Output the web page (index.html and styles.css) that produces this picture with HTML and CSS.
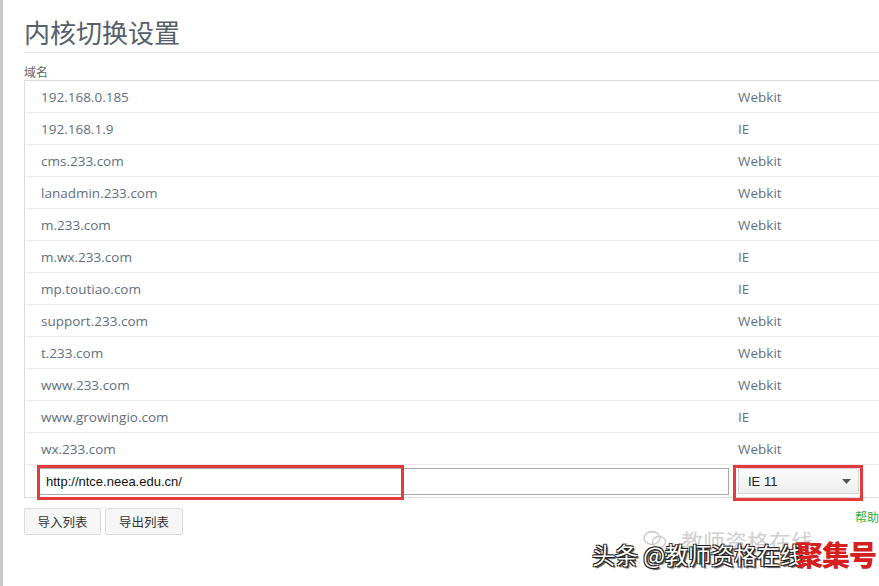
FILE: index.html
```html
<!DOCTYPE html>
<html lang="zh-CN">
<head>
    <meta charset="UTF-8">
    <title>内核切换设置</title>
    <link rel="stylesheet" href="styles.css">
</head>
<body>
    <div class="page">
        <h1 class="page-title">内核切换设置</h1>
        <div class="field-label">域名</div>

        <div class="rule-table">
            <div class="rule-row"><span class="domain">192.168.0.185</span><span class="engine">Webkit</span></div>
            <div class="rule-row"><span class="domain">192.168.1.9</span><span class="engine">IE</span></div>
            <div class="rule-row"><span class="domain">cms.233.com</span><span class="engine">Webkit</span></div>
            <div class="rule-row"><span class="domain">lanadmin.233.com</span><span class="engine">Webkit</span></div>
            <div class="rule-row"><span class="domain">m.233.com</span><span class="engine">Webkit</span></div>
            <div class="rule-row"><span class="domain">m.wx.233.com</span><span class="engine">IE</span></div>
            <div class="rule-row"><span class="domain">mp.toutiao.com</span><span class="engine">IE</span></div>
            <div class="rule-row"><span class="domain">support.233.com</span><span class="engine">Webkit</span></div>
            <div class="rule-row"><span class="domain">t.233.com</span><span class="engine">Webkit</span></div>
            <div class="rule-row"><span class="domain">www.233.com</span><span class="engine">Webkit</span></div>
            <div class="rule-row"><span class="domain">www.growingio.com</span><span class="engine">IE</span></div>
            <div class="rule-row"><span class="domain">wx.233.com</span><span class="engine">Webkit</span></div>

            <div class="edit-row">
                <div class="url-wrap">
                    <input class="url-input" type="text" value="http://ntce.neea.edu.cn/">
                    <span class="mark mark-url"></span>
                </div>
                <div class="select-wrap">
                    <div class="engine-select">
                        <span>IE 11</span>
                        <svg class="caret" width="9" height="5" viewBox="0 0 9 5"><path d="M0 0h9L4.5 5z" fill="#555"/></svg>
                    </div>
                    <span class="mark mark-select"></span>
                </div>
            </div>
        </div>

        <div class="actions">
            <button class="btn" type="button">导入列表</button>
            <button class="btn" type="button">导出列表</button>
            <a class="help-link" href="#">帮助</a>
        </div>
    </div>

    <div class="watermark-faint">
        <svg width="24" height="20" viewBox="0 0 24 20"><ellipse cx="9" cy="8" rx="8" ry="6.5" fill="none" stroke="#c8c8c8" stroke-width="1.3"/><ellipse cx="16" cy="12" rx="6.5" ry="5.5" fill="none" stroke="#c8c8c8" stroke-width="1.3"/></svg>
        <span>教师资格在线</span>
    </div>
    <div class="watermark">
        <span class="wm-text">头条 @教师资格在线</span><span class="wm-red">聚集号</span>
    </div>
</body>
</html>
```

FILE: styles.css
```css
* {
    margin: 0;
    padding: 0;
    box-sizing: border-box;
}

body {
    font-family: 'Open Sans', 'Noto Sans CJK SC', sans-serif;
    background: #fff;
    width: 879px;
    height: 586px;
    overflow: hidden;
    position: relative;
    border-left: 3px solid #c9c9c9;
}

.page {
    padding: 14px 0 0 21px;
}

.page-title {
    font-family: 'Noto Sans CJK SC', sans-serif;
    font-size: 26px;
    font-weight: 400;
    color: #56606b;
    line-height: 36px;
    padding-bottom: 2px;
    border-bottom: 1px solid #e6e6e6;
}

.field-label {
    font-family: 'Noto Sans CJK SC', sans-serif;
    font-size: 12px;
    color: #666;
    line-height: 16px;
    margin-top: 11px;
}

.rule-table {
    border: 1px solid #dcdcdc;
    border-right: none;
}

.rule-row {
    display: flex;
    height: 32px;
    align-items: center;
    border-bottom: 1px solid #e9e9e9;
    font-size: 13.5px;
    color: #617080;
}

.domain {
    width: 713px;
    padding-left: 16px;
}

.engine {
    flex: 1;
}

.edit-row {
    display: flex;
    align-items: center;
    height: 32px;
    padding-left: 14px;
}

.url-wrap,
.select-wrap {
    position: relative;
}

.url-input {
    display: block;
    width: 690px;
    height: 27px;
    border: 1px solid #a9a9a9;
    padding: 0 6px;
    font-family: 'Liberation Sans', Arial, sans-serif;
    font-size: 13px;
    color: #111;
    outline: none;
}

.select-wrap {
    margin-left: 9px;
}

.engine-select {
    width: 121px;
    height: 26px;
    display: flex;
    align-items: center;
    justify-content: space-between;
    padding: 0 7px 0 9px;
    border: 1px solid #d6d6d6;
    background: linear-gradient(#fafafa, #eeeeee);
    font-family: 'Liberation Sans', Arial, sans-serif;
    font-size: 13px;
    color: #222;
}

/* red annotation boxes drawn over the controls */
.mark {
    position: absolute;
    border: 3px solid #e23b3b;
    pointer-events: none;
}

.mark-url {
    left: -2px;
    top: -3px;
    width: 367px;
    height: 35px;
}

.mark-select {
    left: -5px;
    top: -3px;
    width: 130px;
    height: 36px;
}

.actions {
    display: flex;
    align-items: center;
    gap: 4px;
    margin-top: 10px;
}

.btn {
    height: 27px;
    padding: 0 11px;
    font-family: 'Noto Sans CJK SC', sans-serif;
    font-size: 12.5px;
    color: #333;
    background: #f6f6f6;
    border: 1px solid #dadada;
    border-radius: 2px;
}

.btn:first-child {
    width: 77px;
}

.btn + .btn {
    width: 78px;
}

.help-link {
    margin-left: auto;
    margin-top: -10px;
    font-family: 'Noto Sans CJK SC', sans-serif;
    font-size: 12px;
    color: #2bb043;
    text-decoration: none;
}

.watermark-faint {
    position: absolute;
    left: 640px;
    top: 527px;
    display: flex;
    align-items: center;
    gap: 14px;
    font-family: 'Noto Sans CJK SC', sans-serif;
    font-size: 22px;
    line-height: 26px;
    color: #cfcfcf;
}

.watermark {
    position: absolute;
    left: 589px;
    top: 534px;
    display: flex;
    align-items: center;
    font-family: 'Noto Sans CJK SC', sans-serif;
    white-space: nowrap;
}

.wm-text {
    font-size: 23px;
    color: #fff;
    text-shadow:
        1px 1px 0 #222,
        -1px -1px 0 #222,
        1px -1px 0 #222,
        -1px 1px 0 #222,
        2px 2px 1px #555;
}

.wm-red {
    font-size: 28px;
    font-weight: 900;
    color: #d4201e;
    margin-left: -8px;
    letter-spacing: -1px;
}
```
